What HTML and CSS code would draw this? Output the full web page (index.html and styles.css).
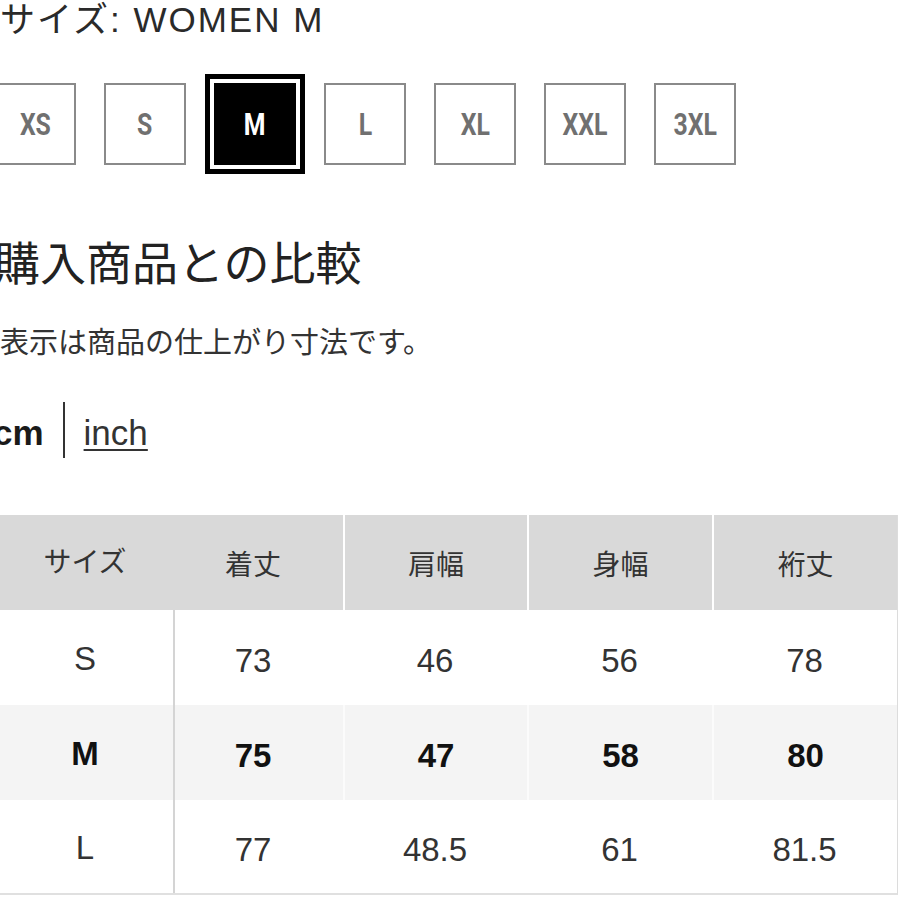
FILE: index.html
```html
<!DOCTYPE html>
<html lang="ja">
<head>
<meta charset="utf-8">
<title>サイズ</title>
<link rel="stylesheet" href="styles.css">
</head>
<body>
<div class="page">
  <div class="title">サイズ: WOMEN M</div>
  <div class="sizes">
    <div class="size"><span>XS</span></div>
    <div class="size"><span>S</span></div>
    <div class="size selected"><span>M</span></div>
    <div class="size"><span>L</span></div>
    <div class="size"><span>XL</span></div>
    <div class="size"><span>XXL</span></div>
    <div class="size"><span>3XL</span></div>
  </div>
  <h2 class="heading">購入商品との比較</h2>
  <p class="note">表示は商品の仕上がり寸法です。</p>
  <div class="units">
    <span class="unit active">cm</span>
    <span class="divider"></span>
    <span class="unit link">inch</span>
  </div>
  <div class="table">
    <div class="row head">
      <div class="cell c1">サイズ</div>
      <div class="cell c2">着丈</div>
      <div class="cell c3">肩幅</div>
      <div class="cell c4">身幅</div>
      <div class="cell c5">裄丈</div>
    </div>
    <div class="row body">
      <div class="cell c1">S</div>
      <div class="cell c2">73</div>
      <div class="cell c3">46</div>
      <div class="cell c4">56</div>
      <div class="cell c5">78</div>
    </div>
    <div class="row body current">
      <div class="cell c1">M</div>
      <div class="cell c2">75</div>
      <div class="cell c3">47</div>
      <div class="cell c4">58</div>
      <div class="cell c5">80</div>
    </div>
    <div class="row body last">
      <div class="cell c1">L</div>
      <div class="cell c2">77</div>
      <div class="cell c3">48.5</div>
      <div class="cell c4">61</div>
      <div class="cell c5">81.5</div>
    </div>
  </div>
</div>
</body>
</html>
```
FILE: styles.css
```css
html, body {
  margin: 0;
  padding: 0;
  background: #fff;
}
body {
  width: 900px;
  height: 900px;
  overflow: hidden;
  font-family: "Liberation Sans", "Noto Sans CJK JP", sans-serif;
  color: #333;
}
.page {
  display: flex;
  flex-direction: column;
}
.title {
  height: 40px;
  line-height: 40px;
  font-size: 35px;
  letter-spacing: 2px;
  color: #2a2a2a;
  font-family: "Liberation Sans", "Noto Sans CJK JP", sans-serif;
  white-space: nowrap;
}
.sizes {
  display: flex;
  gap: 28px;
  margin-top: 43px;
  margin-left: -6px;
}
.size {
  box-sizing: border-box;
  width: 82px;
  height: 82px;
  border: 2px solid #8a8a8a;
  display: flex;
  align-items: center;
  justify-content: center;
  font-family: Roboto, "Liberation Sans", sans-serif;
  font-weight: 700;
  font-size: 31px;
  color: #707070;
}
.size span {
  display: inline-block;
  transform: scaleX(0.8);
  line-height: 1;
}
.size.selected {
  background: #000;
  border-color: #000;
  color: #fff;
  outline: 5px solid #000;
  outline-offset: 4px;
}
.heading {
  margin: 72px 0 0 -6px;
  height: 46px;
  font-size: 46px;
  line-height: 46px;
  font-weight: 400;
  color: #222;
  font-family: "Noto Sans CJK JP", sans-serif;
  white-space: nowrap;
}
.note {
  margin: 43px 0 0 0;
  height: 29px;
  font-size: 29px;
  line-height: 29px;
  color: #333;
  font-family: "Noto Sans CJK JP", sans-serif;
  white-space: nowrap;
}
.units {
  display: flex;
  align-items: center;
  gap: 19px;
  margin: 47px 0 0 -7px;
  height: 56px;
}
.unit {
  font-size: 35px;
  line-height: 40px;
  padding-top: 6px;
  font-family: "Liberation Sans", sans-serif;
}
.unit.active {
  font-weight: 700;
  color: #1a1a1a;
}
.unit.link {
  color: #333;
  text-decoration: underline;
  text-decoration-thickness: 2px;
  text-underline-offset: 4px;
}
.divider {
  width: 2px;
  height: 56px;
  background: #333;
}
.table {
  margin: 57px 0 0 -5px;
  width: 903px;
  box-sizing: border-box;
  border-right: 1px solid #dcdcdc;
  border-bottom: 2px solid #e0e0e0;
}
.row {
  display: grid;
  grid-template-columns: 180px 168px 184px 185px 185px;
  height: 95px;
}
.row.last {
  height: 93px;
}
.cell {
  display: flex;
  align-items: center;
  justify-content: center;
  box-sizing: border-box;
}
.c2 {
  padding-right: 12px;
}
.row.head {
  background: #d9d9d9;
}
.head .cell {
  font-family: "Noto Sans CJK JP", sans-serif;
  font-size: 28px;
  color: #333;
}
.head .c3, .head .c4, .head .c5 {
  border-left: 2px solid #fff;
}
.head .c1 {
  padding-bottom: 6px;
}
.body .cell {
  font-size: 33px;
  color: #333;
  padding-top: 6px;
  font-family: "Liberation Sans", sans-serif;
}
.body .c1 {
  border-right: 2px solid #d4d4d4;
  padding-left: 2px;
  padding-top: 2px;
}
.row.current {
  background: #f4f4f4;
}
.current .cell {
  font-weight: 700;
  color: #111;
}
.current .c3, .current .c4, .current .c5 {
  border-left: 2px solid #fbfbfb;
}
```
